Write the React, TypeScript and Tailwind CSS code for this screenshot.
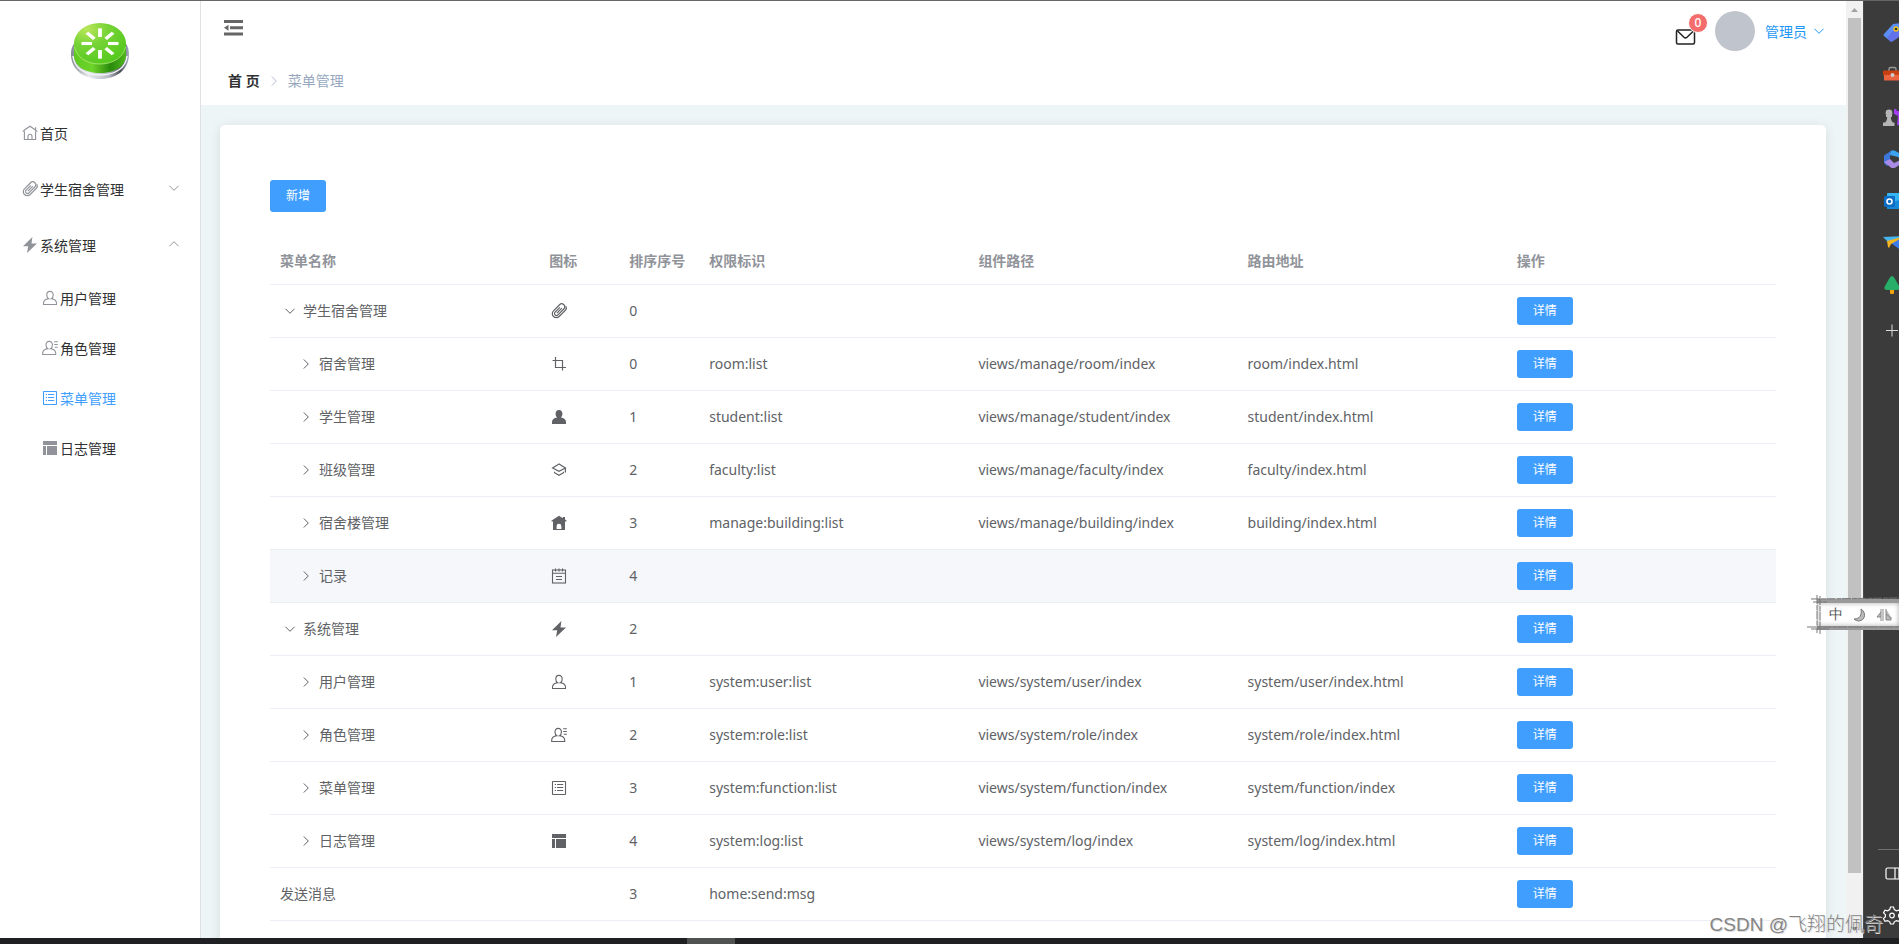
import React from "react";

type IconName =
  | "home" | "clip" | "bolt" | "user" | "role" | "list" | "grid"
  | "crop" | "person" | "school" | "house" | "notes";

function Icon({ name, className = "" }: { name: IconName; className?: string }) {
  const line = { fill: "none", stroke: "currentColor", strokeWidth: 1.1 };
  const shapes: Record<IconName, React.ReactNode> = {
    home: (
      <g {...line}>
        <path d="M2.4 6.2v8.3h11.2V6.2" />
        <path d="M.7 6.6 3.2 4.5 8 1.2l4.8 3.3 2.5 2.1M13.6 5V2.2" />
        <path d="M6 14.4v-3.2a2 2 0 0 1 4 0v3.2" />
      </g>
    ),
    clip: (
      <g transform="rotate(45 8 8)" {...line} strokeWidth={1.2}>
        <path d="M12 4.500v7.300a4 4 0 0 1-8 0V3.200a3 3 0 0 1 6 0v8.300a2 2 0 0 1-4 0V4.800" />
        <path d="M12 5V3.200a3.400 3.400 0 0 0-2.600-3.300M8 4v7" />
      </g>
    ),
    bolt: <path fill="currentColor" d="M10.400 0 1 9.300h5.200L5 16l10-9.600H9.500z" />,
    user: (
      <g {...line}>
        <path d="M8 1.4c-2 0-3.2 1.4-3.2 3.5 0 1.7.7 3.1 1.8 3.8C4 9.1 1.6 10.3 1.5 13v1.5h13V13c-.1-2.7-2.500-3.900-5.100-4.300 1.100-.700 1.800-2.100 1.800-3.800 0-2.100-1.200-3.500-3.200-3.500z" />
      </g>
    ),
    role: (
      <g {...line}>
        <path d="M7.200 1.400C5.200 1.400 4 2.800 4 4.900c0 1.700.7 3.100 1.800 3.800C3.200 9.100.8 10.300.7 13v1.500h13V13c-.1-2.700-2.500-3.900-5.100-4.300 1.100-.7 1.800-2.100 1.800-3.800 0-2.100-1.200-3.500-3.200-3.500z" />
        <path d="M12.200 1.700h3.600M12.200 4.500h3.600M12.800 7.300h3" />
      </g>
    ),
    list: (
      <g {...line}>
        <rect x="1.500" y="1.500" width="13" height="13" rx=".4" />
        <path d="M3.800 4.500H5M6 4.500h6.200M3.800 7.500H5M6 7.500h6.200M3.800 10.500H5M6 10.500h6.200" />
      </g>
    ),
    grid: (
      <g fill="currentColor">
        <path d="M1 1h14v4H1zM1 6h3v9H1zM5 6h10v9H5z" />
      </g>
    ),
    crop: <path {...line} strokeWidth={1.200} d="M4.500 1v10.500H15M1.500 4.500h10v10" />,
    person: (
      <path
        fill="currentColor"
        d="M8 1C5.800 1 4.600 2.600 4.600 4.800c0 1.700.6 2.900 1.500 3.800C3 9.200 1 10.600 1 13v2h14v-2c0-2.400-2-3.800-5.100-4.400.9-.9 1.500-2.100 1.500-3.800C11.400 2.600 10.200 1 8 1z"
      />
    ),
    school: (
      <g {...line} strokeWidth={1.200}>
        <path d="M8 2 1.600 6 8 9.400 14.400 6zM14.400 6v4.500" />
        <path d="M3.500 9.800v.9L8 13.200l4.500-2.500v-.9" />
      </g>
    ),
    house: (
      <path
        fill="currentColor"
        fillRule="evenodd"
        d="M8 .8 11.800 3.200V2H14v2.600l1.700 1.200-.6.900-1.100-.5V15H2V6.200l-1.100.5-.6-.9zM8 8.800a2.400 2.400 0 0 0-2.400 2.400V14h4.800v-2.800A2.400 2.400 0 0 0 8 8.800z"
      />
    ),
    notes: (
      <g {...line}>
        <rect x="1.500" y="2" width="13" height="13" />
        <path d="M1.500 5.200h13M4.500.5v3M8 .5v3M11.500.5v3M5 8.500h6M5 11.500h6" />
      </g>
    ),
  };
  return (
    <svg viewBox="0 0 16 16" className={`size-4 shrink-0 ${className}`} aria-hidden="true">
      {shapes[name]}
    </svg>
  );
}

const turns = { down: "", up: "rotate-180", right: "-rotate-90" };

function Chevron({ dir, className = "" }: { dir: keyof typeof turns; className?: string }) {
  return (
    <svg viewBox="0 0 12 12" className={`size-3 shrink-0 ${turns[dir]} ${className}`} aria-hidden="true">
      <path d="M1.500 3.800 6 8.300l4.500-4.500" fill="none" stroke="currentColor" strokeWidth="1" />
    </svg>
  );
}

function Logo() {
  const rays = [0, 45, 90, 135, 180, 225, 270, 315];
  return (
    <svg viewBox="0 0 58 58" className="size-[58px]" role="img" aria-label="logo">
      <defs>
        <linearGradient id="metal" x1="0" x2="1">
          <stop offset="0" stopColor="#7d8790" />
          <stop offset=".3" stopColor="#e9ebee" />
          <stop offset=".65" stopColor="#b9bcc6" />
          <stop offset=".85" stopColor="#4a4c58" />
          <stop offset="1" stopColor="#a9b0c4" />
        </linearGradient>
        <linearGradient id="side" x1="0" x2="1">
          <stop offset="0" stopColor="#5fc91f" />
          <stop offset=".35" stopColor="#6fd42b" />
          <stop offset=".7" stopColor="#2a8a0c" />
          <stop offset="1" stopColor="#4fb81c" />
        </linearGradient>
        <radialGradient id="face" cx=".25" cy=".15" r=".9">
          <stop offset="0" stopColor="#b9e65a" />
          <stop offset=".45" stopColor="#76d336" />
          <stop offset="1" stopColor="#55c91e" />
        </radialGradient>
      </defs>
      <path d="M0 32C0 18 12 12 29 12s29 6 29 20c0 15-12 25-29 25S0 47 0 32z" fill="url(#metal)" />
      <path d="M2 34c1 12 12 19 27 19s26-7 27-19" fill="none" stroke="#f4f5f7" strokeWidth="1.500" />
      <path d="M3 21v12c0 11 11 18 26 18s26-7 26-18V21z" fill="url(#side)" />
      <ellipse cx="29" cy="21.500" rx="26" ry="20.500" fill="url(#face)" />
      <path d="M3.500 25c2 10 12 17 25.500 17s23.500-7 25.500-17" fill="none" stroke="#b5ea7c" strokeWidth=".8" />
      <g transform="translate(29 21.500) scale(1 .82)" stroke="#fff" strokeWidth="3.800">
        {rays.map((a) => (
          <path key={a} d="M8 0h10.500" transform={`rotate(${a})`} />
        ))}
      </g>
    </svg>
  );
}

type Item = { label: string; icon: IconName; arrow?: "up" | "down"; active?: boolean };
const subItems: Item[] = [
  { label: "用户管理", icon: "user" },
  { label: "角色管理", icon: "role" },
  { label: "菜单管理", icon: "list", active: true },
  { label: "日志管理", icon: "grid" },
];
const topItems: Item[] = [
  { label: "首页", icon: "home" },
  { label: "学生宿舍管理", icon: "clip", arrow: "down" },
  { label: "系统管理", icon: "bolt", arrow: "up" },
];

function Sidebar() {
  return (
    <aside className="w-[201px] shrink-0 border-r border-[#dfe1e5] bg-white">
      <div className="flex h-[104px] justify-center pt-[21px]">
        <Logo />
      </div>
      <nav>
        {topItems.map((item) => (
          <a key={item.label} href="#" className="flex h-14 items-center px-5 text-[#303133]">
            <span className="flex w-5 justify-center text-[#909399]">
              <Icon name={item.icon} />
            </span>
            <span className="grow">{item.label}</span>
            {item.arrow && <Chevron dir={item.arrow} className="mb-[3px] text-[#909399]" />}
          </a>
        ))}
        {subItems.map((item) => (
          <a
            key={item.label}
            href="#"
            className={`flex h-[50px] items-center pl-10 ${item.active ? "text-[#409eff]" : "text-[#303133]"}`}
          >
            <span className={`flex w-5 justify-center ${item.active ? "" : "text-[#909399]"}`}>
              <Icon name={item.icon} />
            </span>
            {item.label}
          </a>
        ))}
      </nav>
    </aside>
  );
}

function Header() {
  return (
    <header className="flex h-[104px] shrink-0 justify-between bg-white">
      <div className="flex flex-col pl-[23px]">
        <button type="button" aria-label="收起菜单" className="mt-[18px] w-5">
          <svg viewBox="0 0 20 18" className="h-[18px] w-5" fill="#666">
            <path d="M0 1h19v3H0zM6 7.300h13v3H6zM0 13.500h19v3H0zM0 8.800 4.500 5.800v6z" />
          </svg>
        </button>
        <div className="mt-8 flex items-center pl-1">
          <a href="#" className="font-bold text-[#303133]">首 页</a>
          <Chevron dir="right" className="mx-2 text-[#b4bccc]" />
          <span className="text-[#97a8be]">菜单管理</span>
        </div>
      </div>
      <div className="flex h-[60px] items-center pr-[21px]">
        <button type="button" aria-label="消息" className="relative mt-3 mr-[18px]">
          <svg viewBox="0 0 22 18" className="h-[18px] w-[22px]" fill="none" stroke="#222" strokeWidth="1.500">
            <rect x="1.500" y="2" width="18" height="14" rx="1.500" />
            <path d="m2.500 3 6.500 6.300q1.500 1.300 3 0L18.500 3" />
          </svg>
          <span className="absolute -top-[15px] left-[13px] flex size-5 items-center justify-center rounded-full border border-white bg-[#f56c6c] text-xs font-medium text-white">
            0
          </span>
        </button>
        <span className="size-10 rounded-full bg-[#c0c4cc]" />
        <button type="button" className="ml-[10px] flex items-center gap-[6px] text-[#1f98f5]">
          管理员
          <Chevron dir="down" />
        </button>
      </div>
    </header>
  );
}

type Row = {
  name: string; level: -1 | 0 | 1; icon?: IconName; order: number;
  perm?: string; view?: string; route?: string; hover?: boolean;
};
const rows: Row[] = [
  { name: "学生宿舍管理", level: 0, icon: "clip", order: 0 },
  { name: "宿舍管理", level: 1, icon: "crop", order: 0, perm: "room:list", view: "views/manage/room/index", route: "room/index.html" },
  { name: "学生管理", level: 1, icon: "person", order: 1, perm: "student:list", view: "views/manage/student/index", route: "student/index.html" },
  { name: "班级管理", level: 1, icon: "school", order: 2, perm: "faculty:list", view: "views/manage/faculty/index", route: "faculty/index.html" },
  { name: "宿舍楼管理", level: 1, icon: "house", order: 3, perm: "manage:building:list", view: "views/manage/building/index", route: "building/index.html" },
  { name: "记录", level: 1, icon: "notes", order: 4, hover: true },
  { name: "系统管理", level: 0, icon: "bolt", order: 2 },
  { name: "用户管理", level: 1, icon: "user", order: 1, perm: "system:user:list", view: "views/system/user/index", route: "system/user/index.html" },
  { name: "角色管理", level: 1, icon: "role", order: 2, perm: "system:role:list", view: "views/system/role/index", route: "system/role/index.html" },
  { name: "菜单管理", level: 1, icon: "list", order: 3, perm: "system:function:list", view: "views/system/function/index", route: "system/function/index" },
  { name: "日志管理", level: 1, icon: "grid", order: 4, perm: "system:log:list", view: "views/system/log/index", route: "system/log/index.html" },
  { name: "发送消息", level: -1, order: 3, perm: "home:send:msg" },
];

function MenuTable() {
  return (
    <table className="mt-[25px] w-full table-fixed border-collapse text-left text-[#606266]">
      <colgroup>
        <col />
        <col className="w-20" />
        <col className="w-20" />
        <col />
        <col />
        <col />
        <col />
      </colgroup>
      <thead>
        <tr className="h-[47px] border-b border-[#ebeef5] text-[#909399]">
          {["菜单名称", "图标", "排序序号", "权限标识", "组件路径", "路由地址", "操作"].map((h) => (
            <th key={h} scope="col" className="px-[10px] font-bold whitespace-nowrap">{h}</th>
          ))}
        </tr>
      </thead>
      <tbody>
        {rows.map((r, i) => (
          <tr key={i} className={`h-[53px] border-b border-[#ebeef5] ${r.hover ? "bg-[#f5f7fb]" : ""}`}>
            <td className="px-[10px]">
              <div className={`flex items-center ${r.level === 1 ? "pl-4" : ""}`}>
                {r.level >= 0 && (
                  <button type="button" aria-label="展开" className="mr-[3px] flex w-5 justify-center">
                    <Chevron dir={r.level === 0 ? "down" : "right"} />
                  </button>
                )}
                {r.name}
              </div>
            </td>
            <td className="px-[10px]">
              {r.icon && (
                <span className="flex w-5 justify-center">
                  <Icon name={r.icon} />
                </span>
              )}
            </td>
            <td className="px-[10px]">{r.order}</td>
            <td className="px-[10px]">{r.perm}</td>
            <td className="px-[10px]">{r.view}</td>
            <td className="px-[10px]">{r.route}</td>
            <td className="px-[10px]">
              <button type="button" className="block h-7 w-14 rounded-[3px] bg-[#409eff] text-xs text-white">
                详情
              </button>
            </td>
          </tr>
        ))}
      </tbody>
    </table>
  );
}

function Scrollbar() {
  return (
    <div className="flex w-[18px] shrink-0 flex-col items-center border-r border-[#4a4a4a] bg-[#f1f1f1]">
      <svg viewBox="0 0 17 17" className="size-[17px] shrink-0" fill="#a3a3a3">
        <path d="m5 11 3.500-4 3.500 4z" />
      </svg>
      <div className="w-[13px] grow bg-[#c1c1c1]" />
      <div className="flex h-[65px] w-full items-end">
        <svg viewBox="0 0 17 17" className="size-[17px]" fill="#505050">
          <path d="m5 6 3.500 4L12 6z" />
        </svg>
      </div>
    </div>
  );
}

function EdgePanel() {
  const slot = "block h-[42px] w-[22px] shrink-0";
  const view = "-3 -10 22 42";
  return (
    <aside className="flex w-[35px] shrink-0 flex-col overflow-hidden bg-[#3b3b3b] pt-[11px] pl-[17px]">
      <svg className={slot} viewBox={view}>
        <path d="m0 12 9-10 8-1q3 0 3 3v7L9 19q-2 1-3 0L0 14q-1-1 0-2z" fill="#5b8ff5" />
        <path d="m3 16 8-10 9 5L9 19q-2 1-3 0z" fill="#6272ea" />
        <circle cx="12" cy="7" r="2" fill="#333" stroke="#f0c419" strokeWidth="1.400" />
      </svg>
      <svg className={slot} viewBox={view}>
        <path d="M5 7V5q0-1.500 1.500-1.500h4Q12 3.500 12 5v2" fill="none" stroke="#999" strokeWidth="1.400" />
        <rect x="-1" y="6.500" width="24" height="5" rx="1" fill="#c83f12" />
        <rect x="0" y="11" width="22" height="5.500" fill="#ea6440" />
        <circle cx="8.500" cy="11" r="2" fill="#ccc" />
      </svg>
      <svg className={slot} viewBox={view}>
        <path d="M10 3h2.500v2h2.500V3h6v16h-8l1-9-4-2z" fill="#a23df0" />
        <g fill="#b5b5b5">
          <circle cx="5" cy="7" r="3.400" />
          <path d="M2 9h6v2H6.800q0 4 2 5.500h1.700V20H-1v-3.500h2.200q2-1.500 2-5.500H2z" />
        </g>
      </svg>
      <svg className={slot} viewBox={view}>
        <path d="M0 7.500 7.500 2.500 10 3 6 8v8l-3 2-3-3z" fill="#3b76d8" />
        <path d="M7.500 2.500h3L19 7v6l-5-4-8-2z" fill="#3aa5ee" />
        <path d="M0 14 6 11l4 4 9-4v4l-8.500 5h-3z" fill="#a98be6" />
      </svg>
      <svg className={slot} viewBox={view}>
        <rect x="3" y="3" width="18" height="16" rx="1" fill="#35b4f1" />
        <path d="m3 14 18-6v11H3z" fill="#1688d8" />
        <rect x="0" y="6" width="11" height="11" rx="1" fill="#0a6cc4" />
        <circle cx="5.500" cy="11.500" r="2.500" fill="none" stroke="#fff" strokeWidth="1.600" />
      </svg>
      <svg className={slot} viewBox={view}>
        <path d="m-1 5 22-1L5 11z" fill="#47b5ee" />
        <path d="m7 11 14-7-6 13z" fill="#3c7bea" />
        <path d="m3 9 18-5L7 12l-2 4-1-1z" fill="#f5b51e" />
      </svg>
      <svg className={slot} viewBox={view}>
        <rect x="6" y="15" width="4" height="5" rx="1" fill="#f0a30a" />
        <path d="M8 2q1.500 0 3 3l4 7q2 4-2 4H3q-4 0-2-4l4-7q1.500-3 3-3z" fill="#27ae68" />
      </svg>
      <svg className={`${slot} mt-[3px]`} viewBox={view} stroke="#ddd">
        <path d="M2 11.500h12M8 5.500v12" />
      </svg>
      <div className="-ml-[3px] mt-auto h-px shrink-0 bg-[#707070]" />
      <div className="flex flex-col pt-[2px] pb-[2px]">
        <svg className={slot} viewBox={view} fill="none" stroke="#fff" strokeWidth="1.200">
          <path d="M18 6H3.500Q2 6 2 7.500v8Q2 17 3.500 17H18M11 6v11M15 6v11" />
        </svg>
        <svg className={slot} viewBox={view} fill="none" stroke="#fff" strokeWidth="1.200">
          <path d="m6.500 3 3 0 .8 2.600 2 1.200 2.700-.7 1.500 2.600-1.900 2 0 2 1.900 2-1.500 2.600-2.700-.7-2 1.200-.8 2.200h-3l-.8-2.200-2-1.200-2.700.7L-.5 14.700l1.900-2 0-2-1.900-2L1 6.100l2.700.7 2-1.200z" />
          <circle cx="8" cy="11.500" r="2.300" />
        </svg>
      </div>
    </aside>
  );
}

function InputMethodBar() {
  return (
    <div className="absolute top-[593px] right-0 h-[42px] w-[92px]">
      <div className="absolute top-[5px] right-0 flex h-[31px] w-[82px] items-center justify-between border-y-4 border-[#9a9a9a] bg-white pr-[7px] pl-[12px] text-[#555] shadow-[inset_0_0_5px_#aaa]">
        <span className="font-serif text-sm">中</span>
        <svg viewBox="0 0 14 14" className="size-[14px]" fill="#bbb" stroke="#777">
          <path d="M8 1c5 3 5 11-2 12-2 0-4-1-5-2 6 0 8-4 7-10z" />
        </svg>
        <svg viewBox="0 0 16 14" className="h-[14px] w-4" fill="#bbb" stroke="#888">
          <path d="M5 1v12M7 1v12M5 4 1 9h4M10 1v11h5V9M10 6l5 4" />
        </svg>
      </div>
      <svg viewBox="0 0 92 42" className="absolute inset-0 h-full w-full" fill="none" stroke="#777">
        <path d="M10 1v38M13 2v38M4 5l88-1M6 8h14M0 33h92M4 35h18" strokeDasharray="9 1 5 .5" />
      </svg>
    </div>
  );
}

export default function App() {
  return (
    <div className="relative flex h-screen flex-col overflow-hidden border-t border-[#666] bg-white text-sm leading-[23px] font-['Noto_Sans','Noto_Sans_CJK_SC',sans-serif]">
      <div className="flex min-h-0 grow">
        <Sidebar />
        <div className="flex min-w-0 grow flex-col overflow-hidden bg-[#edf5f7]">
          <Header />
          <main className="py-5 pr-5 pl-[19px]">
            <section className="rounded-[5px] bg-white px-[50px] pt-[55px] pb-[50px] shadow-[0_2px_12px_rgba(0,0,0,0.1)]">
              <button type="button" className="block h-8 w-14 rounded-[3px] bg-[#409eff] text-xs text-white">
                新增
              </button>
              <MenuTable />
            </section>
          </main>
        </div>
        <Scrollbar />
        <EdgePanel />
      </div>
      <footer className="h-[6px] shrink-0 bg-[#1e2021]">
        <div className="ml-[687px] h-full w-12 bg-[#505252]" />
      </footer>
      <InputMethodBar />
      <div className="absolute right-4 bottom-2 text-[19px] font-light text-[#858585] [text-shadow:1px_1px_0_#ddd] font-['Liberation_Sans','Noto_Sans_CJK_SC',sans-serif]">
        CSDN @飞翔的佩奇
      </div>
    </div>
  );
}
